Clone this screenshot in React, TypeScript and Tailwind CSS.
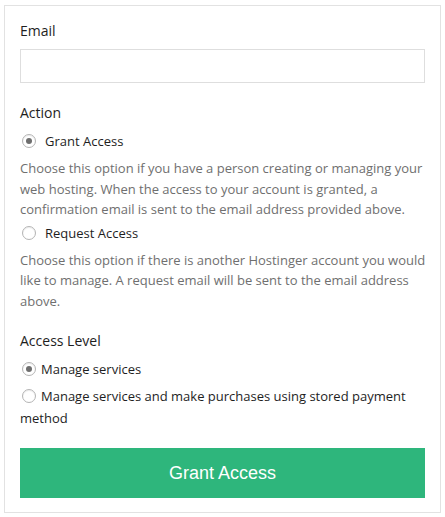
const Radio = ({ checked }: { checked?: boolean }) => (
  <span className="inline-flex items-center justify-center w-[14px] h-[14px] rounded-full border border-[#b4b4b4] bg-white shrink-0 shadow-[inset_0_1px_1px_rgba(0,0,0,0.08)]">
    {checked && <span className="w-[6px] h-[6px] rounded-full bg-[#6e6e6e]" />}
  </span>
);

export default function App() {
  return (
    <div className="w-[445px] h-[517px] bg-white pt-[5px] pl-[4px] font-['Open_Sans',sans-serif] text-[#1e1e1e]">
      <div className="w-[437px] h-[508px] border border-[#e2e2e2] bg-white px-[15px] pt-[15px]">
        <div className="text-[14px] leading-[20px]">Email</div>
        <input className="mt-[8px] block w-full h-[34px] border border-[#dedede] outline-none" />

        <div className="mt-[20px] text-[14px] leading-[20px]">Action</div>
        <label className="mt-[8px] flex items-center gap-[9px] pl-[2px] text-[13px] leading-[20px]">
          <Radio checked />
          <span>Grant Access</span>
        </label>
        <p className="mt-[7px] mr-[-8px] text-[13px] leading-[20.5px] text-[#6f6f6f]">
          Choose this option if you have a person creating or managing your web hosting. When the access to your account is granted, a confirmation email is sent to the email address provided above.
        </p>
        <label className="mt-[3px] flex items-center gap-[9px] pl-[2px] text-[13px] leading-[20px]">
          <Radio />
          <span>Request Access</span>
        </label>
        <p className="mt-[7px] mr-[-8px] text-[13px] leading-[20.5px] text-[#6f6f6f]">
          Choose this option if there is another Hostinger account you would like to manage. A request email will be sent to the email address above.
        </p>

        <div className="mt-[20px] text-[14px] leading-[20px]">Access Level</div>
        <label className="mt-[8px] flex items-center gap-[5px] pl-[2px] text-[13px] leading-[20px]">
          <Radio checked />
          <span>Manage services</span>
        </label>
        <label className="mt-[6px] block pl-0 text-[13px] leading-[22px]">
          <span className="inline-flex align-[-2px] ml-[2px] mr-[5px]">
            <Radio />
          </span>
          Manage services and make purchases using stored payment method
        </label>

        <button className="mt-[19px] w-full h-[50px] bg-[#2eb67c] text-white text-[18px] font-['Liberation_Sans',Arial,sans-serif]">
          Grant Access
        </button>
      </div>
    </div>
  );
}
